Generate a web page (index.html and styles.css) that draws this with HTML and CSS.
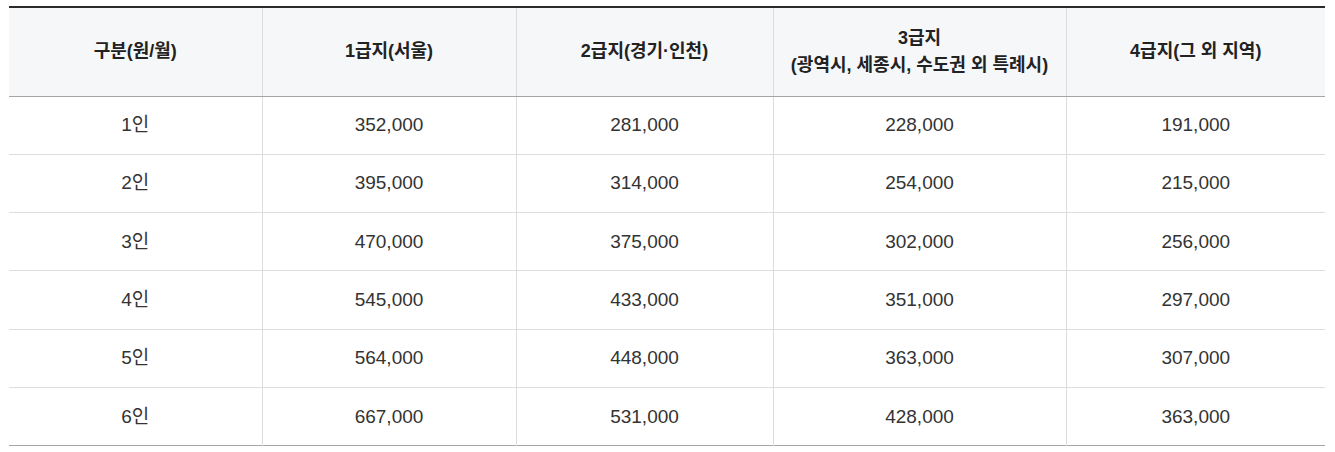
FILE: index.html
```html
<!DOCTYPE html>
<html lang="ko">
<head>
<meta charset="utf-8">
<link rel="stylesheet" href="styles.css">
</head>
<body>
<div class="wrap">
<table class="tbl">
  <colgroup>
    <col class="c1"><col class="c2"><col class="c3"><col class="c4"><col class="c5">
  </colgroup>
  <thead>
    <tr>
      <th>구분(원/월)</th>
      <th>1급지(서울)</th>
      <th>2급지(경기·인천)</th>
      <th>3급지<br>(광역시, 세종시, 수도권 외 특례시)</th>
      <th>4급지(그 외 지역)</th>
    </tr>
  </thead>
  <tbody>
    <tr><td>1인</td><td>352,000</td><td>281,000</td><td>228,000</td><td>191,000</td></tr>
    <tr><td>2인</td><td>395,000</td><td>314,000</td><td>254,000</td><td>215,000</td></tr>
    <tr><td>3인</td><td>470,000</td><td>375,000</td><td>302,000</td><td>256,000</td></tr>
    <tr><td>4인</td><td>545,000</td><td>433,000</td><td>351,000</td><td>297,000</td></tr>
    <tr><td>5인</td><td>564,000</td><td>448,000</td><td>363,000</td><td>307,000</td></tr>
    <tr><td>6인</td><td>667,000</td><td>531,000</td><td>428,000</td><td>363,000</td></tr>
  </tbody>
</table>
</div>
</body>
</html>
```
FILE: styles.css
```css
html, body { margin: 0; padding: 0; background: #fff; }
.wrap { padding: 6px 10px 0 9px; }
.tbl {
  width: 1316px;
  border-collapse: collapse;
  table-layout: fixed;
  font-family: "Liberation Sans", "Noto Sans CJK KR", sans-serif;
  font-size: 19px;
  color: #333;
  border-top: 2px solid #2b2b2b;
  border-bottom: 1px solid #a5a5a5;
}
.c1 { width: 253px; }
.c2 { width: 254px; }
.c3 { width: 257px; }
.c4 { width: 293px; }
.c5 { width: 259px; }
.tbl th {
  background: #f6f7f9;
  color: #222;
  font-weight: 700;
  font-size: 18px;
  line-height: 27px;
  height: 89px;
  padding: 0 8px;
  box-sizing: border-box;
  text-align: center;
  vertical-align: middle;
  border-left: 1px solid #dcdcdc;
  border-bottom: 1px solid #a5a5a5;
}
.tbl td {
  height: 58.33px;
  padding: 0 8px;
  box-sizing: border-box;
  text-align: center;
  vertical-align: middle;
  line-height: 24px;
  border-left: 1px solid #dcdcdc;
  border-top: 1px solid #dedede;
}
.tbl th:first-child, .tbl td:first-child { border-left: none; }
.tbl tbody tr:first-child td { border-top: none; }
```
